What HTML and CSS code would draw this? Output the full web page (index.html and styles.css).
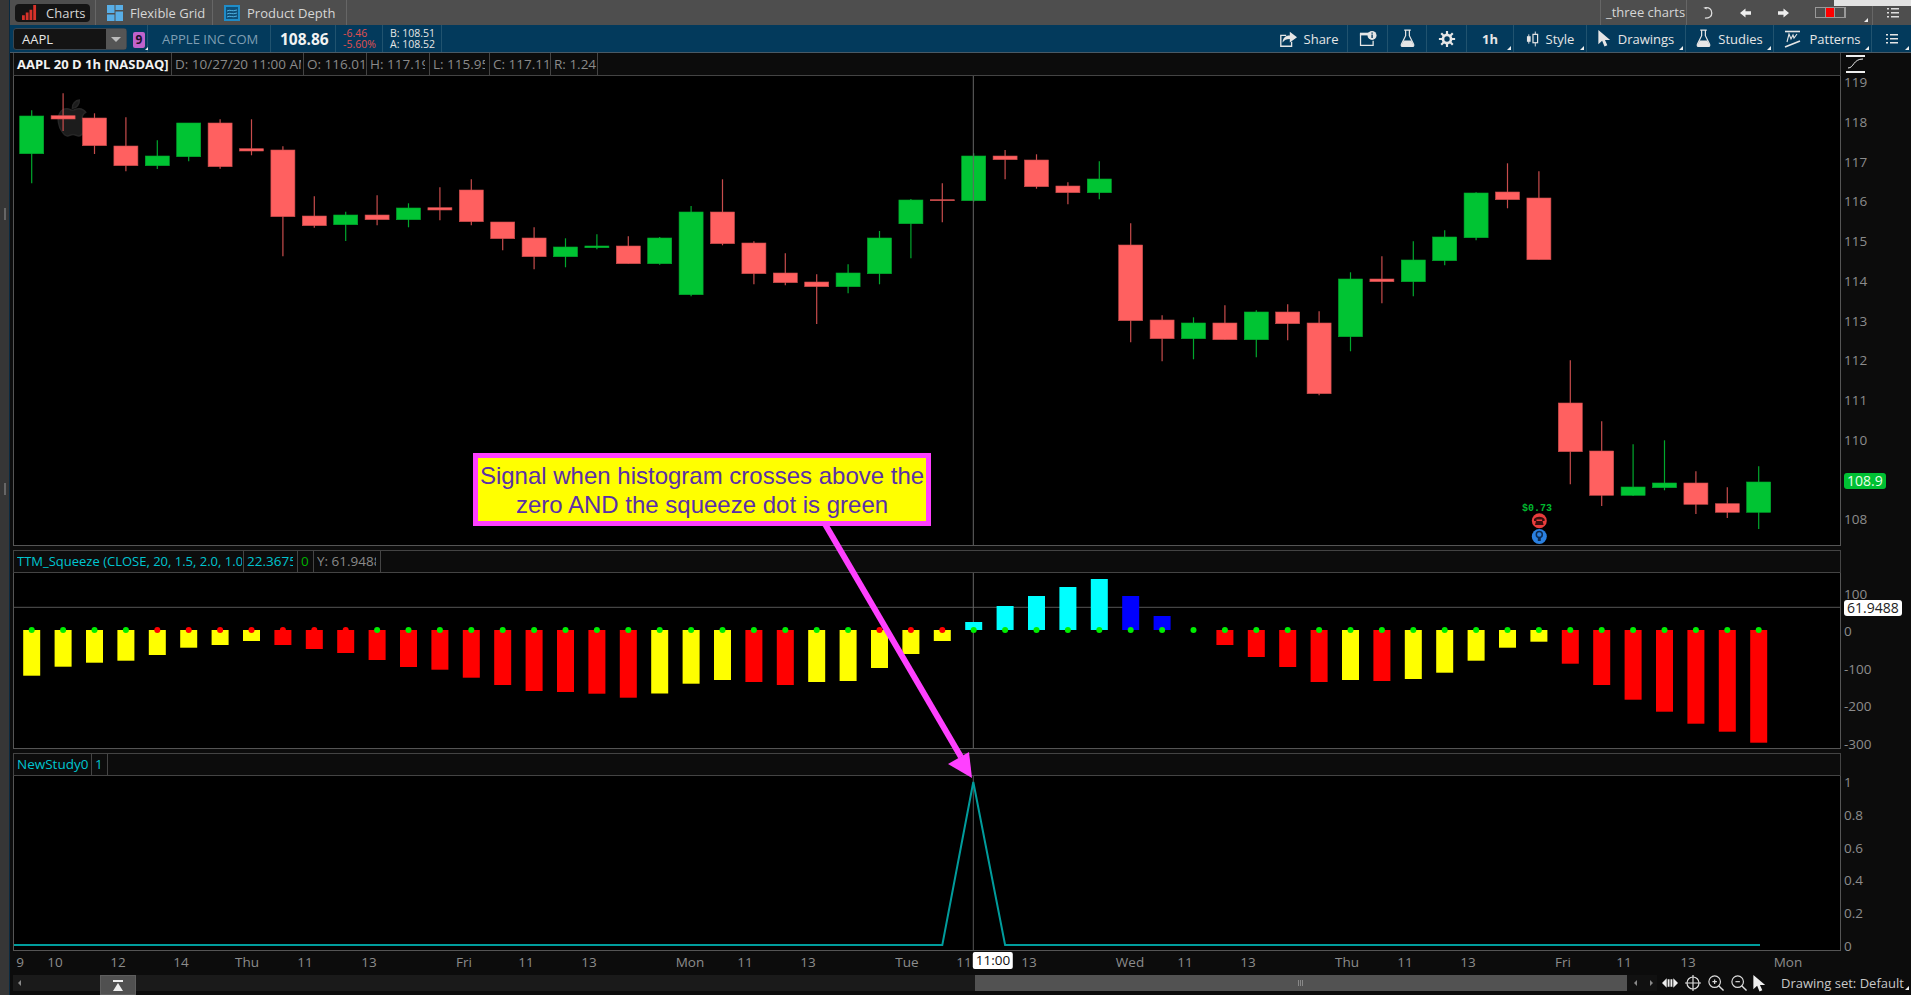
FILE: index.html
```html
<!DOCTYPE html>
<html lang="en">
<head>
    <meta charset="UTF-8">
    <title>Charts</title>
    <link rel="stylesheet" href="styles.css">
</head>
<body>
    <div class="side"><span class="grip"></span><span class="grip"></span></div>
    <div class="main">
        <!-- top tabs -->
        <div class="tabs">
            <div class="tab-charts">
                <svg class="ico-charts" viewBox="0 0 16 16"><path d="M0 11h3v5H0zM4 8h3v8H4zM8 5h3v11H8zM12 0h3v16h-3z" fill="#d8322a"/></svg>
                <span>Charts</span>
            </div>
            <div class="tab tab-grid">
                <svg class="ico-16" viewBox="0 0 16 16"><path d="M0 0h7.500v8H0zM8.500 0H16v5H8.500zM0 9.500h7.500V16H0zM8.500 6.500H16V16H8.500z" fill="#58aee6"/></svg>
                <span>Flexible Grid</span>
            </div>
            <div class="tab tab-depth">
                <svg class="ico-16" viewBox="0 0 16 16"><rect x="1" y="1" width="14" height="14" fill="#0f4f78" stroke="#1f8cc8" stroke-width="2"/><path d="M3 6c3-2 5 1 10-1M3 9c3-2 5 1 10-1M3 12c3-2 5 1 10-1" fill="none" stroke="#4fb0e0"/></svg>
                <span>Product Depth</span>
            </div>
            <div class="tabs-right">
                <div class="tab-name">_three charts</div>
                <div class="tab-tools">
                    <svg class="ico-12" viewBox="0 0 12 14"><path d="M3 1c5-1 8 2 8 6s-3 6-8 6" fill="none" stroke="#ddd" stroke-width="1.500"/><path d="M1 1l4-1v3z" fill="#ddd"/></svg>
                    <svg class="ico-12" viewBox="0 0 12 12"><path d="M0 6l6-5v3h6v4H6v3z" fill="#eee"/></svg>
                    <svg class="ico-12" viewBox="0 0 12 12"><path d="M12 6L6 1v3H0v4h6v3z" fill="#eee"/></svg>
                    <div class="layout-cells corner"><i></i><i class="on"></i><i></i></div>
                </div>
                <div class="tab-list">
                    <svg class="ico-list" viewBox="0 0 12 12"><path d="M0 1h2v1.500H0zM4 1h8v1.500H4zM0 5h2v1.500H0zM4 5h8v1.500H4zM0 9h2v1.500H0zM4 9h8v1.500H4z" fill="#ddd"/></svg>
                </div>
            </div>
            <div class="tip"></div>
        </div>

        <!-- symbol bar -->
        <div class="symbar">
            <div class="symbol-box">
                <span>AAPL</span>
                <div class="symbol-drop"></div>
            </div>
            <div class="badge corner">9</div>
            <div class="sym-cell sym-name">APPLE INC COM</div>
            <div class="sym-cell sym-last">108.86</div>
            <div class="sym-cell sym-change"><span>-6.46</span><span>-5.60%</span></div>
            <div class="sym-cell sym-quote"><span>B: 108.51</span><span>A: 108.52</span></div>
            <div class="tools">
                <div class="tool">
                    <svg class="ico-18" viewBox="0 0 20 20"><path d="M14 13v5H2V6h6" fill="none" stroke="#e6e6e6" stroke-width="1.500"/><path d="M12 2l8 6-8 6v-4c-4 0-6 1-8 4 0-5 3-8 8-8z" fill="#e6e6e6"/></svg>
                    <span>Share</span>
                </div>
                <div class="tool">
                    <svg class="ico-18" viewBox="0 0 20 20"><path d="M1 3h14v3H1z" fill="#e6e6e6"/><path d="M1.700 5v12h14v-5" fill="none" stroke="#e6e6e6" stroke-width="1.400"/><circle cx="14.500" cy="6" r="5" fill="#e6e6e6"/><path d="M13.800 2.800h1.500v1.300h-1.500zM13.800 5h1.500v4h-1.500z" fill="#033a5c"/></svg>
                </div>
                <div class="tool">
                    <svg class="ico-flask" viewBox="0 0 16 20"><path d="M4.500 1h7M6 1v6l-4.500 9c-.5 1.500 0 2.500 1.500 2.500h10c1.500 0 2-1 1.500-2.500L10 7V1" fill="none" stroke="#e6e6e6" stroke-width="1.300"/><path d="M4 12h8l2.500 5c.2 1-.3 1.500-1 1.500h-11c-.7 0-1.200-.5-1-1.500z" fill="#e6e6e6"/></svg>
                </div>
                <div class="tool">
                    <svg class="ico-18" viewBox="0 0 20 20"><circle cx="10" cy="10" r="4.500" fill="none" stroke="#e6e6e6" stroke-width="3"/><path d="M10 1v4M10 15v4M1 10h4M15 10h4M3.600 3.600l3 3M13.400 13.400l3 3M3.600 16.400l3-3M13.400 6.600l3-3" stroke="#e6e6e6" stroke-width="2.400"/></svg>
                </div>
                <div class="tool corner"><b class="tool-1h">1h</b></div>
                <div class="tool corner">
                    <svg class="ico-style" viewBox="0 0 14 18"><path d="M3 4v10M10 1v16" stroke="#e6e6e6"/><rect x="1" y="6" width="4" height="6" fill="#e6e6e6"/><rect x="7.500" y="4" width="5" height="9" fill="#033a5c" stroke="#e6e6e6" stroke-width="1.300"/></svg>
                    <span>Style</span>
                </div>
                <div class="tool corner">
                    <svg class="ico-cursor" viewBox="0 0 13 18"><path d="M0 0v15l4-3.500 2.500 6 3-1.300-2.500-5.700h5.500z" fill="#e6e6e6"/></svg>
                    <span>Drawings</span>
                </div>
                <div class="tool corner">
                    <svg class="ico-flask" viewBox="0 0 16 20"><path d="M4.500 1h7M6 1v6l-4.500 9c-.5 1.500 0 2.500 1.500 2.500h10c1.500 0 2-1 1.500-2.500L10 7V1" fill="none" stroke="#e6e6e6" stroke-width="1.300"/><path d="M4 12h8l2.500 5c.2 1-.3 1.500-1 1.500h-11c-.7 0-1.200-.5-1-1.500z" fill="#e6e6e6"/></svg>
                    <span>Studies</span>
                </div>
                <div class="tool corner">
                    <svg class="ico-18" viewBox="0 0 18 18"><path d="M1 1.500h15" stroke="#e6e6e6" stroke-width="1.600"/><path d="M3 12l2-8 2 5 2-4 1 3 3-4" fill="none" stroke="#e6e6e6" stroke-width="1.100"/><path d="M1 17l15-6" stroke="#e6e6e6" stroke-width="1.600"/></svg>
                    <span>Patterns</span>
                </div>
                <div class="tool corner">
                    <svg class="ico-list" viewBox="0 0 12 12"><path d="M0 1h2v1.500H0zM4 1h8v1.500H4zM0 5h2v1.500H0zM4 5h8v1.500H4zM0 9h2v1.500H0zM4 9h8v1.500H4z" fill="#e6e6e6"/></svg>
                </div>
            </div>
        </div>

        <!-- chart area -->
        <div class="workspace">
            <div class="study study-price">
                <div class="legend">
                    <div class="cell cell-sym">AAPL 20 D 1h [NASDAQ]</div>
                    <div class="cell cell-date"><span>D: 10/27/20 11:00 AM</span></div>
                    <div class="cell cell-o">O: 116.01</div>
                    <div class="cell cell-h"><span>H: 117.19</span></div>
                    <div class="cell cell-l"><span>L: 115.95</span></div>
                    <div class="cell cell-c">C: 117.11</div>
                    <div class="cell cell-r">R: 1.24</div>
                </div>
                <div class="plot"><svg id="pricePlot" class="plot-svg"></svg></div>
                <div class="axis" id="priceAxis">
                    <svg class="ico-axis" viewBox="0 0 19 18"><path d="M0 1h19M0 17h19" stroke="#eee" stroke-width="2"/><path d="M2 13c6 0 5-9 15-9" fill="none" stroke="#eee"/></svg>
                </div>
            </div>
            <div class="study study-squeeze">
                <div class="legend">
                    <div class="cell cell-ttm teal"><span>TTM_Squeeze (CLOSE, 20, 1.5, 2.0, 1.0)</span></div>
                    <div class="cell cell-val teal"><span>22.3675</span></div>
                    <div class="cell cell-zero">0</div>
                    <div class="cell cell-y"><span>Y: 61.9488</span></div>
                </div>
                <div class="plot"><svg id="squeezePlot" class="plot-svg"></svg></div>
                <div class="axis" id="squeezeAxis"></div>
            </div>
            <div class="study study-signal">
                <div class="legend">
                    <div class="cell cell-new teal">NewStudy0</div>
                    <div class="cell cell-one teal">1</div>
                </div>
                <div class="plot"><svg id="signalPlot" class="plot-svg"></svg></div>
                <div class="axis" id="signalAxis"></div>
            </div>
            <div class="timeline" id="timeline"></div>
            <div class="bottom">
                <div class="track">
                    <span class="arrow-left"></span>
                    <div class="snap">
                        <svg class="ico-snap" viewBox="0 0 10 11"><path d="M0 0h10v2H0zM5 3l5 8H0z" fill="#eee"/></svg>
                    </div>
                    <div class="thumb"><span class="thumb-grip"></span></div>
                    <div class="track-end"><span class="arrow-left"></span><span class="arrow-right"></span></div>
                </div>
                <div class="bottom-tools">
                    <svg class="ico-lr" viewBox="0 0 17 12"><path d="M0 6l5-5v10zM17 6l-5-5v10z" fill="#eee"/><path d="M6 2h2v8H6zM9 2h2v8H9z" fill="#eee"/></svg>
                    <svg class="ico-bt" viewBox="0 0 16 16"><circle cx="8" cy="8" r="6" fill="none" stroke="#ddd" stroke-width="1.200"/><path d="M8 0v16M0 8h16" stroke="#ddd" stroke-width="1.200"/></svg>
                    <svg class="ico-bt" viewBox="0 0 18 18"><circle cx="7.500" cy="7.500" r="6.500" fill="none" stroke="#ddd" stroke-width="1.300"/><path d="M12 12l5.500 5.500" stroke="#ddd" stroke-width="1.600"/><path d="M5 7.500h5M7.500 5v5" stroke="#ddd" stroke-width="1.300"/></svg>
                    <svg class="ico-bt" viewBox="0 0 18 18"><circle cx="7.500" cy="7.500" r="6.500" fill="none" stroke="#ddd" stroke-width="1.300"/><path d="M12 12l5.500 5.500" stroke="#ddd" stroke-width="1.600"/><path d="M5 7.500h5" stroke="#ddd" stroke-width="1.300"/></svg>
                    <svg class="ico-arrow" viewBox="0 0 13 18"><path d="M0 0v15l4-3.500 2.500 6 3-1.300-2.500-5.700h5.500z" fill="#eee"/></svg>
                    <span class="drawing-set corner">Drawing set: Default</span>
                </div>
            </div>
        </div>
    </div>

    <!-- annotation drawn over the chart -->
    <div class="note">Signal when histogram crosses above the<br>zero AND the squeeze dot is green</div>
    <svg class="note-arrow" viewBox="0 0 1911 995">
        <path d="M825 524L961 757" stroke="#ff40ff" stroke-width="6" fill="none"/>
        <path d="M972 778L948 764L969 752z" fill="#ff40ff"/>
    </svg>

    <script src="chart.js"></script>
</body>
</html>
```

FILE: styles.css
```css
* {
    box-sizing: border-box;
}
html, body {
    margin: 0;
    height: 100%;
    overflow: hidden;
}
body {
    display: flex;
    position: relative;
    width: 1911px;
    height: 995px;
    font-family: "Open Sans", Arial, sans-serif;
    font-size: 13px;
    color: #ccc;
    background-color: #0c0c0c;
}
svg {
    display: block;
    flex: none;
}

/* left edge strip */
.side {
    width: 10px;
    background-color: #363636;
    display: flex;
    flex-direction: column;
    align-items: center;
    gap: 263px;
    padding-top: 208px;
    border-right: 1px solid #0a2a40;
}
.grip {
    width: 2px;
    height: 12px;
    background-color: #666;
}
.main {
    flex: 1;
    display: flex;
    flex-direction: column;
    min-width: 0;
}

/* top tabs */
.tabs {
    height: 25px;
    display: flex;
    align-items: center;
    background-color: #4e4e4e;
    padding-left: 5px;
    color: #d6d6d6;
    font-size: 13px;
    white-space: nowrap;
    position: relative;
}
.tab-charts {
    width: 75px;
    height: 18px;
    margin-right: 5px;
    display: flex;
    align-items: center;
    gap: 9px;
    padding-left: 7px;
    background-color: #141414;
    border-radius: 4px;
}
.ico-charts {
    width: 15px;
    height: 15px;
}
.tab {
    height: 25px;
    display: flex;
    align-items: center;
    gap: 7px;
    border-left: 1px solid #666;
}
.tab-grid {
    width: 117px;
    padding-left: 11px;
}
.tab-depth {
    width: 135px;
    padding-left: 11px;
    border-right: 1px solid #666;
}
.ico-16 {
    width: 16px;
    height: 16px;
}
.tabs-right {
    margin-left: auto;
    display: flex;
    height: 25px;
    align-items: center;
}
.tab-name {
    width: 87px;
    height: 25px;
    line-height: 25px;
    padding-left: 5px;
    border-left: 1px solid #666;
    border-right: 1px solid #666;
}
.tab-tools {
    width: 185px;
    height: 25px;
    display: flex;
    align-items: center;
    gap: 27px;
    padding-left: 15px;
    position: relative;
}
.ico-12 {
    width: 11px;
    height: 12px;
}
.layout-cells {
    margin-left: -1px;
    width: 31px;
    height: 11px;
    display: flex;
    border: 1px solid #999;
}
.layout-cells i {
    flex: 1;
    border-right: 1px solid #999;
}
.layout-cells i.on {
    background-color: #f00;
}
.tab-tools .corner {
    position: static;
}
.tab-tools .corner::after {
    right: 4px;
    bottom: 3px;
}
.tab-list {
    width: 39px;
    height: 25px;
    padding-left: 14px;
    display: flex;
    align-items: center;
    border-left: 1px solid #666;
}
.ico-list {
    width: 12px;
    height: 12px;
}
.tip {
    position: absolute;
    top: 0;
    right: 0;
    width: 77px;
    height: 6px;
    background-color: #e2e2e2;
}
.corner {
    position: relative;
}
.corner::after {
    content: "";
    position: absolute;
    right: 2px;
    bottom: 2px;
    border-left: 4px solid transparent;
    border-bottom: 4px solid #eee;
}

/* symbol bar */
.symbar {
    height: 28px;
    display: flex;
    align-items: stretch;
    background-color: #033a5c;
    border-bottom: 1px solid #4a5a66;
    padding-left: 3px;
    color: #e6e6e6;
}
.symbol-box {
    width: 114px;
    height: 22px;
    margin-top: 3px;
    display: flex;
    align-items: center;
    justify-content: space-between;
    background-color: #141414;
    border: 1px solid #3a4650;
    border-radius: 3px;
    padding-left: 8px;
    font-size: 13px;
}
.symbol-drop {
    width: 20px;
    height: 20px;
    position: relative;
    background-color: #555;
}
.symbol-drop::after {
    content: "";
    position: absolute;
    left: 5px;
    top: 8px;
    border-left: 5px solid transparent;
    border-right: 5px solid transparent;
    border-top: 5px solid #bbb;
}
.badge {
    width: 12px;
    height: 16px;
    margin: 7px 2px 0 6px;
    background-color: #c062cc;
    border-radius: 2px;
    color: #20102a;
    font-size: 12px;
    font-weight: 700;
    line-height: 16px;
    text-align: center;
}
.badge::after {
    right: -3px;
    bottom: -2px;
    border-left-width: 3px;
    border-bottom-width: 3px;
}
.sym-cell {
    border-left: 1px solid #21536f;
    display: flex;
    align-items: center;
}
.sym-name {
    width: 123px;
    padding-left: 14px;
    color: #7f9eb3;
}
.sym-last {
    width: 65px;
    padding-left: 9px;
    font-size: 15.5px;
    font-weight: 700;
    color: #f2f2f2;
}
.sym-change, .sym-quote {
    flex-direction: column;
    align-items: flex-start;
    justify-content: center;
    padding-left: 7px;
    font-size: 10.5px;
    line-height: 11px;
}
.sym-change {
    width: 47px;
    color: #e05050;
}
.sym-quote {
    width: 60px;
    border-right: 1px solid #21536f;
}
.tools {
    margin-left: auto;
    display: grid;
    grid-template-columns: 77px 40px 39px 40px 47px 73px 99px 88px 98px 40px;
}
.tool {
    display: flex;
    align-items: center;
    justify-content: center;
    gap: 7px;
    border-left: 1px solid #21536f;
}
.tool:first-child {
    border-left: none;
}
.tool-1h {
    font-size: 13px;
}
.ico-18 {
    width: 18px;
    height: 18px;
}
.ico-flask {
    width: 15px;
    height: 19px;
}
.ico-style {
    width: 13px;
    height: 18px;
}
.ico-cursor {
    width: 13px;
    height: 17px;
}

/* chart area */
.workspace {
    flex: 1;
    padding-left: 3px;
    min-height: 0;
}
.study {
    display: grid;
    grid-template-columns: 1828px 70px;
    grid-template-rows: 23px 1fr;
}
.study-price {
    height: 493px;
}
.study-squeeze {
    height: 199px;
    margin-top: 4px;
}
.study-signal {
    height: 198px;
    margin-top: 4px;
}
.legend {
    display: flex;
    grid-column: 1;
    background-color: #0c0c0c;
    border: 1px solid #444;
    color: #8a8a8a;
    font-size: 13.5px;
    line-height: 21px;
}
.study-price .legend {
    border-top: none;
    line-height: 22px;
}
.cell {
    border-right: 1px solid #444;
    padding: 0 4px 0 3px;
    white-space: nowrap;
}
.cell span {
    display: block;
    overflow: hidden;
}
.teal {
    color: #00c4d0;
}
.cell-sym {
    width: 158px;
    font-size: 13px;
    font-weight: 700;
    color: #f2f2f2;
}
.cell-date { width: 132px; padding-right: 2px; }
.cell-o { width: 63px; }
.cell-h { width: 63px; }
.cell-l { width: 60px; }
.cell-c { width: 61px; }
.cell-r { width: 47px; }
.cell-ttm { width: 230px; font-size: 13px; padding-right: 1px; }
.cell-val { width: 54px; }
.cell-zero { width: 16px; color: #00b000; }
.cell-y { width: 67px; }
.cell-new { width: 78px; }
.cell-one { width: 16px; }
.plot {
    grid-column: 1;
    grid-row: 2;
    min-height: 0;
    background-color: #000;
    border-left: 1px solid #555;
    border-right: 1px solid #555;
    border-bottom: 1px solid #555;
}
.plot-svg {
    width: 100%;
    height: 100%;
}
.axis {
    grid-column: 2;
    grid-row: 1 / span 2;
    position: relative;
}
.axis-label {
    position: absolute;
    left: 3px;
    transform: translateY(-50%);
    font-size: 13.5px;
    color: #8c8c8c;
    line-height: 16px;
}
.axis-tag {
    position: absolute;
    left: 3px;
    transform: translateY(-50%);
    padding: 0 3px;
    font-size: 14px;
    line-height: 16px;
    border-radius: 3px;
}
.tag-green {
    background-color: #00c033;
    color: #e8ffe8;
}
.tag-white {
    background-color: #fff;
    color: #222;
}
.ico-axis {
    position: absolute;
    left: 5px;
    top: 2px;
    width: 19px;
    height: 18px;
}
.timeline {
    position: relative;
    height: 24px;
    font-size: 13.5px;
    color: #8c8c8c;
}
.time-label {
    position: absolute;
    top: 3px;
    transform: translateX(-50%);
    line-height: 16px;
}
.time-now {
    top: 1px;
    padding: 0 3px;
    background-color: #fff;
    color: #111;
    border-radius: 2px;
    line-height: 17px;
}
.bottom {
    height: 20px;
    display: flex;
    align-items: flex-start;
}
.track {
    flex: none;
    width: 1644px;
    height: 16px;
    display: flex;
    background-color: #1a1a1a;
}
.arrow-left, .arrow-right {
    align-self: center;
    border-top: 3px solid transparent;
    border-bottom: 3px solid transparent;
}
.arrow-left {
    margin-left: 5px;
    border-right: 3px solid #888;
}
.arrow-right {
    margin-left: 13px;
    border-left: 3px solid #888;
}
.snap {
    width: 36px;
    height: 20px;
    margin-left: 79px;
    display: flex;
    align-items: center;
    justify-content: center;
    background-color: #505050;
    border: 1px solid #5e5e5e;
}
.ico-snap {
    width: 10px;
    height: 11px;
}
.thumb {
    width: 652px;
    margin-left: auto;
    background-color: #525252;
    display: flex;
    align-items: center;
    justify-content: center;
}
.thumb-grip {
    width: 6px;
    height: 6px;
    background: repeating-linear-gradient(90deg, #888 0 1px, transparent 1px 2px);
}
.track-end {
    width: 30px;
    display: flex;
    background-color: #111;
    padding-left: 2px;
}
.bottom-tools {
    flex: none;
    display: flex;
    align-items: center;
    height: 16px;
    margin-left: 5px;
    color: #c8c8c8;
}
.ico-lr {
    width: 16px;
    height: 12px;
}
.ico-bt {
    width: 16px;
    height: 16px;
    margin-left: 7px;
}
.ico-arrow {
    width: 13px;
    height: 17px;
    margin-left: 6px;
}
.drawing-set {
    margin-left: 15px;
    padding-right: 7px;
    font-size: 13px;
    white-space: nowrap;
}

/* annotation */
.note {
    position: absolute;
    left: 473px;
    top: 453px;
    width: 458px;
    height: 73px;
    padding-top: 3px;
    background-color: #ff0;
    border: 5px solid #ff40ff;
    font-family: "Liberation Sans", Arial, sans-serif;
    font-size: 24px;
    line-height: 29px;
    text-align: center;
    white-space: nowrap;
    color: #5a30a8;
}
.note-arrow {
    position: absolute;
    left: 0;
    top: 0;
    width: 1911px;
    height: 995px;
    pointer-events: none;
}
```

FILE: chart.js
```js
// all chart data below is in page pixels, read off the screen
const NS = 'http://www.w3.org/2000/svg';

function add(svg, tag, attrs, text) {
    const el = document.createElementNS(NS, tag);
    for (const key in attrs) el.setAttribute(key, attrs[key]);
    if (text) el.textContent = text;
    svg.appendChild(el);
    return el;
}

// line the svg user units up with the page
function fitToPage(svg) {
    const r = svg.getBoundingClientRect();
    svg.setAttribute('viewBox', `${r.left} ${r.top} ${r.width} ${r.height}`);
}

const barX = i => 31.7 + i * 31.4;

// up/down, body top, body bottom, wick top, wick bottom
const candles = [
    ['u',116,153.7,110.3,183.3], ['d',115.7,119,93.3,131], ['d',118,145.7,113.3,154], ['d',146,165.7,117.3,171.3],
    ['u',156,165.7,140.3,169], ['u',123,156.7,123,161.3], ['d',123,166.7,119.3,168.7], ['d',148.7,151,119.3,155.3],
    ['d',150,216.7,146.3,256.3], ['d',216,225.7,196.3,227.7], ['u',215,224.7,211.7,241], ['d',215,219.7,195.3,225.3],
    ['u',208,219.7,203.3,227.3], ['d',207.7,210,187.3,220.3], ['d',190,221.7,179.3,225.3], ['d',222,238.7,222,250.3],
    ['d',238,256.7,227.3,269.3], ['u',247,256.7,238.3,267.3], ['u',246,247.7,234.3,249.3], ['d',246,263.7,236.3,263.7],
    ['u',238,263.7,237,264.7], ['u',212,294.7,206,296.3], ['d',212,243.7,179.3,245.3], ['d',243,273.7,241.3,284.3],
    ['d',273,282.7,253.3,285.3], ['d',282,286.7,274.3,324], ['u',273,286.7,264.3,293.3], ['u',238,273.7,231,284.3],
    ['u',200,223.7,199,258.3], ['d',199.7,200.7,183.3,222.3], ['u',156,200.7,153.3,201.7], ['d',156,159.7,150,179.3],
    ['d',160,186.7,154.3,188.7], ['d',186,192.7,182.3,204.3], ['u',179,192.7,161.3,199.3], ['d',245,320.7,223.3,342.3],
    ['d',320,338.7,315.3,361.3], ['u',323,338.7,317.3,359.3], ['d',323,339.7,305.3,339.7], ['u',312,339.7,310.3,357.3],
    ['d',312,323.7,304.3,340.3], ['d',323,393.7,311.3,395.3], ['u',279,336.7,272.3,351.3], ['d',279,281.7,256.3,303.3],
    ['u',260,281.7,241.3,296.3], ['u',237,260.7,230.3,265.3], ['u',193,237.7,192.3,240.3], ['d',192,199.7,163.3,208.3],
    ['d',198,259.7,171.3,259.7], ['d',403,451.7,360.3,484.3], ['d',451,495.3,421.3,506], ['u',487,495.3,444.3,496],
    ['u',483,487.7,440.3,490.3], ['d',483,504.3,471.3,514], ['d',503.7,512.3,487.3,518], ['u',482,512.3,466.3,529]
];

const CROSS_X = 973.3;
const CROSS_Y = 607.3;
const ZERO_Y = 630;

const squeeze = [
    -45.7,-36.7,-32.7,-30.7,-25,-17.7,-15,-11,-15,-19,-23,-30,-37,-39.7,
    -47.7,-55,-61,-62,-63.7,-67.7,-63.5,-53.7,-50,-52,-55,-52,-51,-38,
    -24,-11,8,24,34,43,51,34,14,0,-15,-27,-37,-52,
    -50,-51,-49,-42.7,-30.7,-17.7,-11.7,-33.7,-55,-69.7,-81.7,-93.7,-101.7,-112.7
];
const barColors = 'yyyyyyyyrrrrrrrrrrrryyyrryyyyycccccbbkrrrryryyyyyrrrrrrr';
const colorMap = { y: '#ffff00', r: '#ff0000', c: '#00ffff', b: '#0000ff' };
const dotIsRed = i => (i >= 4 && i <= 10) || (i >= 27 && i <= 29);

function drawPrice() {
    const svg = document.getElementById('pricePlot');
    fitToPage(svg);

    // faint apple watermark
    const logo = add(svg, 'path', {
        d: 'M12.152 6.896c-.948 0-2.415-1.078-3.96-1.04-2.04.027-3.91 1.183-4.961 3.014-2.117 3.675-.546 9.103 1.519 12.09 1.013 1.454 2.208 3.09 3.792 3.039 1.52-.065 2.09-.987 3.935-.987 1.831 0 2.35.987 3.96.948 1.637-.026 2.676-1.48 3.676-2.948 1.156-1.688 1.636-3.325 1.662-3.415-.039-.013-3.182-1.221-3.22-4.857-.026-3.04 2.48-4.494 2.597-4.559-1.429-2.09-3.623-2.324-4.39-2.376-2-.156-3.675 1.09-4.61 1.09zM15.53 3.83c.843-1.012 1.4-2.427 1.245-3.83-1.207.052-2.662.805-3.532 1.818-.78.896-1.454 2.338-1.273 3.714 1.338.104 2.715-.688 3.559-1.701',
        fill: '#1c1c1c',
        transform: 'translate(55 100) scale(1.45 1.5)'
    });
    logo.setAttribute('stroke', '#262626');

    candles.forEach((c, i) => {
        const x = barX(i);
        const up = c[0] === 'u';
        add(svg, 'line', {
            x1: x, x2: x, y1: c[3], y2: c[4],
            stroke: up ? '#00a82d' : '#c84c4c', 'stroke-width': 1.2
        });
        add(svg, 'rect', {
            x: x - 12, y: c[1], width: 24, height: c[2] - c[1],
            fill: up ? '#00c433' : '#ff6060',
            stroke: up ? '#00a82d' : '#c84c4c', 'stroke-width': 0.6
        });
    });

    add(svg, 'line', { x1: CROSS_X, x2: CROSS_X, y1: 76, y2: 546, stroke: '#666', 'stroke-width': 1 });

    // earnings and news markers
    add(svg, 'text', {
        x: 1537, y: 511, 'text-anchor': 'middle', fill: '#00b82f',
        'font-family': '"Liberation Mono", monospace', 'font-size': 10, 'font-weight': 700
    }, '$0.73');
    add(svg, 'circle', { cx: 1539.3, cy: 520.7, r: 7.5, fill: '#e83c3c' });
    add(svg, 'path', { d: 'M1534 519c3-3 7.600-3 10.600 0v2h-2.500v-1.500h-5.600V521H1534zM1536 521h6.600l1 4h-8.600z', fill: '#3a0c0c' });
    add(svg, 'circle', { cx: 1539.3, cy: 536.5, r: 7.5, fill: '#2a80e0' });
    add(svg, 'circle', { cx: 1539.3, cy: 534.5, r: 3, fill: 'none', stroke: '#0c2a50', 'stroke-width': 1.5 });
    add(svg, 'path', { d: 'M1537.800 538h3v3h-3z', fill: '#0c2a50' });
}

function drawSqueeze() {
    const svg = document.getElementById('squeezePlot');
    fitToPage(svg);
    add(svg, 'line', { x1: 14, x2: 1840, y1: CROSS_Y, y2: CROSS_Y, stroke: '#555', 'stroke-width': 1 });
    add(svg, 'line', { x1: CROSS_X, x2: CROSS_X, y1: 572, y2: 749, stroke: '#666', 'stroke-width': 1 });

    squeeze.forEach((h, i) => {
        const x = barX(i);
        if (h !== 0) {
            add(svg, 'rect', {
                x: x - 8.5, width: 17,
                y: h > 0 ? ZERO_Y - h : ZERO_Y,
                height: Math.abs(h),
                fill: colorMap[barColors[i]]
            });
        }
    });
    squeeze.forEach((h, i) => {
        add(svg, 'circle', { cx: barX(i), cy: ZERO_Y, r: 3, fill: dotIsRed(i) ? '#ff0000' : '#00ee00' });
    });
}

function drawSignal() {
    const svg = document.getElementById('signalPlot');
    fitToPage(svg);
    add(svg, 'line', { x1: CROSS_X, x2: CROSS_X, y1: 775, y2: 950, stroke: '#555', 'stroke-width': 1 });
    add(svg, 'polyline', {
        points: `14,945 ${barX(29)},945 ${CROSS_X},782 ${barX(31)},945 1760,945`,
        fill: 'none', stroke: '#009c9c', 'stroke-width': 2
    });
}

function axisLabels(id, labels) {
    const axis = document.getElementById(id);
    const top = axis.getBoundingClientRect().top;
    labels.forEach(l => {
        const el = document.createElement('div');
        el.className = l[2] ? 'axis-tag ' + l[2] : 'axis-label';
        el.textContent = l[0];
        el.style.top = (l[1] - top) + 'px';
        axis.appendChild(el);
    });
}

function drawTimeline() {
    const line = document.getElementById('timeline');
    const times = [
        ['9',20],['10',55],['12',118],['14',181],['Thu',247],['11',305],['13',369],['Fri',464],['11',526],['13',589],
        ['Mon',690],['11',745],['13',808],['Tue',907],['11',964],['13',1029],['Wed',1130],['11',1185],['13',1248],
        ['Thu',1347],['11',1405],['13',1468],['Fri',1563],['11',1624],['13',1688],['Mon',1788]
    ];
    const left = line.getBoundingClientRect().left;
    times.forEach(t => {
        const el = document.createElement('div');
        el.className = 'time-label';
        el.textContent = t[0];
        el.style.left = (t[1] - left) + 'px';
        line.appendChild(el);
    });
    const now = document.createElement('div');
    now.className = 'time-label time-now';
    now.textContent = '11:00';
    now.style.left = (993 - left) + 'px';
    line.appendChild(now);
}

drawPrice();
drawSqueeze();
drawSignal();
drawTimeline();

const prices = [];
for (let p = 119; p >= 108; p--) prices.push([String(p), 82 + (119 - p) * 39.75]);
prices.push(['108.9', 481, 'tag-green']);
axisLabels('priceAxis', prices);
axisLabels('squeezeAxis', [['100',594],['61.9488',607.5,'tag-white'],['0',631],['-100',669],['-200',706],['-300',744]]);
axisLabels('signalAxis', [['1',782],['0.8',815],['0.6',848],['0.4',880],['0.2',913],['0',946]]);
```
